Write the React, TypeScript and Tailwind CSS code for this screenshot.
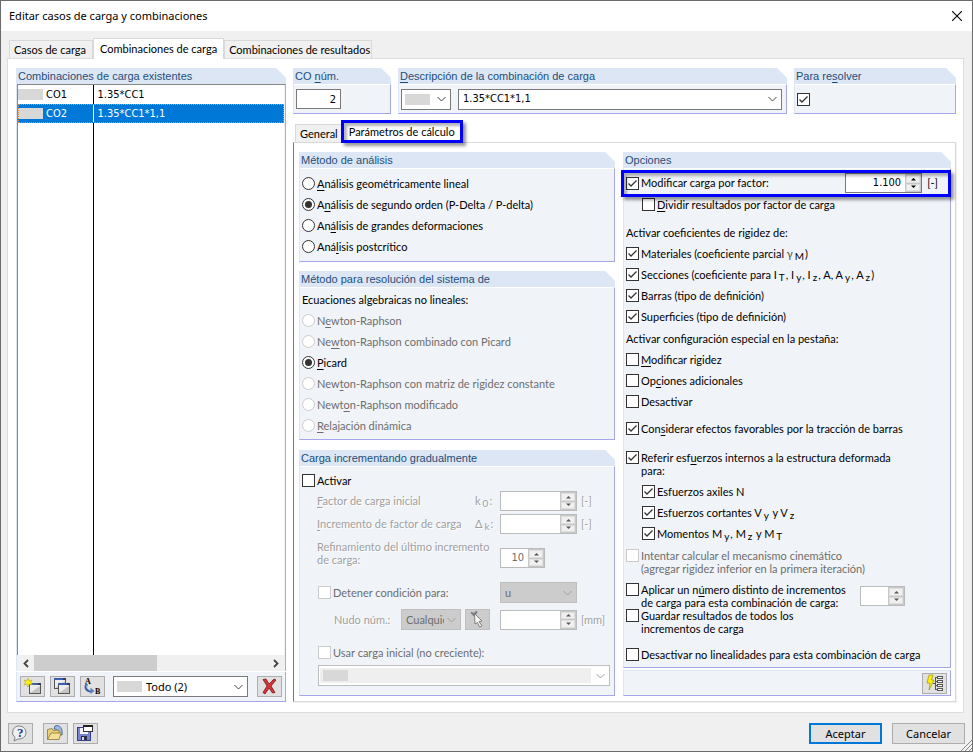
import type { ReactNode } from 'react';
import { clsx } from 'clsx';

const mono = "font-['DejaVu_Sans_Condensed','DejaVu_Sans',sans-serif] text-[11px]";

/* Text with an underlined access key, marked by & */
function Mn({ text }: { text: string }) {
  const i = text.indexOf('&');
  if (i < 0) return <>{text}</>;
  return (
    <>
      {text.slice(0, i)}
      <span className="underline underline-offset-2">{text[i + 1]}</span>
      {text.slice(i + 2)}
    </>
  );
}

function Sub({ children }: { children: ReactNode }) {
  return <sub className="bottom-[-2px] mr-px ml-0.5 text-[10px]">{children}</sub>;
}

function Group({ title, className, bodyClass, children }: { title: string; className?: string; bodyClass?: string; children: ReactNode }) {
  return (
    <section
      className={clsx(
        'flex flex-col border-b border-l border-b-[#a6a6ea] border-l-[#dce6f5] bg-[#f0f4f9] [clip-path:polygon(0_0,calc(100%-10px)_0,100%_10px,100%_100%,0_100%)]',
        className,
      )}
    >
      <h2 className="h-4 shrink-0 truncate bg-[#dce6f5] pl-px font-['Liberation_Sans',Arial,sans-serif] text-[11px] leading-4 text-[#1f4e79]">
        <Mn text={title} />
      </h2>
      <div className={clsx('flex-1 border-t border-r border-t-white border-r-[#a6a6ea]', bodyClass)}>{children}</div>
    </section>
  );
}

function CheckBox({ checked, disabled, label }: { checked?: boolean; disabled?: boolean; label?: string }) {
  return (
    <span className="relative inline-flex shrink-0">
      <input
        type="checkbox"
        aria-label={label}
        defaultChecked={checked}
        disabled={disabled}
        className="peer h-[13px] w-[13px] appearance-none border border-[#333] bg-white disabled:border-[#ccc]"
      />
      <svg viewBox="0 0 13 13" className="pointer-events-none absolute inset-0 hidden h-[13px] w-[13px] peer-checked:block">
        <path d="M2.5 6.5 L5 9 L10.5 3.5" fill="none" stroke="#333" strokeWidth="1.3" />
      </svg>
    </span>
  );
}

function Check({ text, checked, disabled, className, children }: { text?: string; checked?: boolean; disabled?: boolean; className?: string; children?: ReactNode }) {
  return (
    <label className={clsx('flex h-[21px] items-center gap-0.5', disabled && 'text-[#6d6d6d]', className)}>
      <CheckBox checked={checked} disabled={disabled} />
      <span>{text ? <Mn text={text} /> : children}</span>
    </label>
  );
}

function Check2({ lines, checked, disabled, className }: { lines: string[]; checked?: boolean; disabled?: boolean; className?: string }) {
  return (
    <label className={clsx('flex items-start gap-0.5 leading-[13px]', disabled && 'text-[#6d6d6d]', className)}>
      <CheckBox checked={checked} disabled={disabled} />
      <span>
        <Mn text={lines[0]} />
        <br />
        {lines[1]}
      </span>
    </label>
  );
}

function Radio({ name, text, checked, disabled }: { name: string; text: string; checked?: boolean; disabled?: boolean }) {
  return (
    <label className={clsx('flex h-[21px] items-center gap-0.5', disabled && 'text-[#6d6d6d]')}>
      <span className="relative inline-flex shrink-0">
        <input
          type="radio"
          name={name}
          defaultChecked={checked}
          disabled={disabled}
          className="peer h-[13px] w-[13px] appearance-none rounded-full border border-[#333] bg-white disabled:border-[#ccc]"
        />
        <span className="pointer-events-none absolute inset-[3px] hidden rounded-full bg-[#333] peer-checked:block" />
      </span>
      <span>
        <Mn text={text} />
      </span>
    </label>
  );
}

function Arrow({ up }: { up?: boolean }) {
  return (
    <svg viewBox="0 0 7 4" className="h-1 w-[7px]">
      <path d={up ? 'M1 3.5 L3.5 1 L6 3.5Z' : 'M1 .5 L3.5 3 L6 .5Z'} fill="currentColor" />
    </svg>
  );
}

function Spin({ label, value, disabled, className }: { label: string; value?: string; disabled?: boolean; className?: string }) {
  const btn = 'flex flex-1 items-center justify-center border border-[#dedede] bg-[#f0f0f0]';
  return (
    <span className={clsx('flex h-5 shrink-0 border', disabled ? 'border-[#bbb] text-[#6d6d6d]' : 'border-[#7a7a7a]', className)}>
      <input
        type="text"
        aria-label={label}
        defaultValue={value}
        disabled={disabled}
        className={clsx('w-0 min-w-0 flex-1 bg-white pr-1 text-right', mono)}
      />
      <span className={clsx('flex w-4 flex-col gap-px bg-[#c8c8c8] p-px', disabled ? 'text-[#555]' : 'text-black')}>
        <button type="button" aria-label={`${label} +`} disabled={disabled} className={btn}>
          <Arrow up />
        </button>
        <button type="button" aria-label={`${label} -`} disabled={disabled} className={btn}>
          <Arrow />
        </button>
      </span>
    </span>
  );
}

function Combo({ label, value, swatch, disabled, className, innerClass, textClass }: { label: string; value?: string; swatch?: boolean; disabled?: boolean; className?: string; innerClass?: string; textClass?: string }) {
  return (
    <span className={clsx('relative flex h-[21px] items-center border', className, disabled ? 'border-[#bfbfbf] text-[#6d6d6d]' : 'border-[#7a7a7a]')}>
      <span className={clsx('flex min-w-0 flex-1 items-center', innerClass)}>
        {swatch && <span className="ml-[3px] h-[11px] w-[25px] shrink-0 bg-[#d8d8d8]" />}
        <select aria-label={label} disabled={disabled} className={clsx('w-0 min-w-0 flex-1 appearance-none truncate bg-transparent pr-4 pl-1 opacity-100', textClass)}>
          <option>{value}</option>
        </select>
      </span>
      <svg viewBox="0 0 9 6" className={clsx('pointer-events-none absolute right-1 h-1.5 w-[9px]', disabled ? 'text-[#a0a0a0]' : 'text-[#444]')}>
        <path d="M.5 1 L4.5 5 L8.5 1" fill="none" stroke="currentColor" />
      </svg>
    </span>
  );
}

function IconButton({ label, disabled, className, children }: { label: string; disabled?: boolean; className?: string; children: ReactNode }) {
  return (
    <button
      type="button"
      aria-label={label}
      disabled={disabled}
      className={clsx('h-[21px] w-[25px] shrink-0 border', disabled ? 'border-[#bfbfbf] bg-[#ccc]' : 'border-[#adadad] bg-[#e1e1e1]', className)}
    >
      <svg viewBox="1 1 23 19" className="block h-full w-full">
        {children}
      </svg>
    </button>
  );
}

function MiniWindow({ x, y }: { x: number; y: number }) {
  return (
    <g>
      <rect x={x + 0.5} y={y + 0.5} width="11" height="10" fill="#ececec" stroke="#555" />
      <path d={`M${x + 1} ${y + 10} L${x + 11} ${y + 3} V${y + 10}Z`} fill="#c4c4c4" />
      <rect x={x} y={y} width="12" height="2" fill="#3a5fb0" />
      <rect x={x + 9} y={y} width="3" height="2" fill="#333a4d" />
    </g>
  );
}

/* Blue frame that marks a control */
function Marker({ className }: { className?: string }) {
  return (
    <span
      className={clsx(
        'pointer-events-none absolute z-10 border-[3px] border-[#0000ff] shadow-[3px_3px_3px_rgba(0,0,0,0.4),inset_3px_3px_3px_rgba(0,0,0,0.3)]',
        className,
      )}
    />
  );
}

const rows = [
  { id: 'CO1', formula: '1.35*CC1' },
  { id: 'CO2', formula: '1.35*CC1*1,1', selected: true },
];

const solvers = [
  { text: 'N&ewton-Raphson', disabled: true },
  { text: 'Ne&wton-Raphson combinado con Picard', disabled: true },
  { text: '&Picard', checked: true },
  { text: 'New&ton-Raphson con matriz de rigidez constante', disabled: true },
  { text: 'Newt&on-Raphson modificado', disabled: true },
  { text: '&Relajación dinámica', disabled: true },
];

function CombinationList() {
  return (
    <div className="flex w-[270px] shrink-0 flex-col">
      <Group title="Combinaciones de carga existentes" className="flex-1 border-b-0" bodyClass="flex flex-col border-t-[#888]! pr-px">
        <div className="flex flex-1 border-l border-[#888] bg-white">
          <table className="h-full w-full border-collapse">
            <tbody>
              {rows.map(r => (
                <tr
                  key={r.id}
                  className={clsx('h-[19px]', mono, r.selected && 'bg-[#0078d7] text-white outline outline-dotted -outline-offset-1 outline-[#e8923c]')}
                >
                  <td className={clsx('w-[75px] border-r p-0', r.selected ? 'border-white' : 'border-black')}>
                    <div className="flex items-center gap-[3px]">
                      <span className="h-[11px] w-[25px] bg-[#d8d8d8]" />
                      {r.id}
                    </div>
                  </td>
                  <td className="py-0 pl-1">{r.formula}</td>
                </tr>
              ))}
              <tr>
                <td className="border-r border-black" />
                <td />
              </tr>
            </tbody>
          </table>
        </div>
        <div className="flex h-4 items-center bg-[#f0f0f0]">
          <button type="button" aria-label="Desplazar a la izquierda" className="flex w-[17px] justify-center">
            <svg viewBox="0 0 6 9" className="h-[9px] w-1.5">
              <path d="M5 1 L1.5 4.5 L5 8" fill="none" stroke="#444" strokeWidth="1.8" />
            </svg>
          </button>
          <div className="flex h-full flex-1">
            <span className="w-[53%] bg-[#cdcdcd]" />
          </div>
          <button type="button" aria-label="Desplazar a la derecha" className="flex w-[17px] justify-center">
            <svg viewBox="0 0 6 9" className="h-[9px] w-1.5">
              <path d="M1 1 L4.5 4.5 L1 8" fill="none" stroke="#444" strokeWidth="1.8" />
            </svg>
          </button>
        </div>
      </Group>
      <div className="mt-px flex h-[30px] items-center gap-[5px] border-r border-b border-l border-[#a6a6ea] border-l-[#dce6f5] bg-[#f0f4f9] pr-[3px] pl-[3px]">
        <IconButton label="Nueva combinación">
          <MiniWindow x={9} y={7} />
          <path d="M8 2 L9.300 5 L12 4 L11 6.500 L12.500 9 L9.300 8 L8 11 L6.700 8 L4 9 L5.500 6.500 L4 4 L6.700 5Z" fill="#fff200" stroke="#a89a20" strokeWidth=".5" />
        </IconButton>
        <IconButton label="Copiar combinación">
          <MiniWindow x={4} y={2} />
          <MiniWindow x={8} y={7} />
        </IconButton>
        <IconButton label="Renumerar">
          <text x="5" y="8" className="font-['Liberation_Serif',serif] text-[8px] font-bold">A</text>
          <path d="M7 8 C4 12 7 16 12 15" fill="none" stroke="#3d5f9e" strokeWidth="2.500" />
          <path d="M7 9 C6 12 8 14.500 12 14.500" fill="none" stroke="#a9c4ee" strokeWidth="1" />
          <path d="M10.500 11.500 L14.500 15 L10.500 18Z" fill="#5d82c4" />
          <text x="15" y="18" className="font-['Liberation_Serif',serif] text-[8px] font-bold">B</text>
        </IconButton>
        <Combo label="Filtro" value="Todo (2)" swatch className="mr-1 ml-[3px] flex-1 bg-white" textClass="font-['Noto_Sans',sans-serif] text-[11px]" />
        <IconButton label="Eliminar">
          <path d="M6 3.500 L9 3 L12 8 L17 3 L19 4 L14 10 L18 16.500 L15.500 17 L12 12 L8 18 L6 16.500 L10 10Z" fill="#d3333a" stroke="#7c1519" strokeWidth=".8" />
        </IconButton>
      </div>
    </div>
  );
}

function IncrementalLoad() {
  const etched = 'text-[#a0a0a0] [text-shadow:1px_1px_0_white]';
  return (
    <Group title="Carga incrementando gradualmente" className="flex-1" bodyClass="pt-[3px] pr-1 pb-2 pl-0.5">
      <Check text="Activar" />
      <div className="grid grid-cols-[1fr_25px_77px_33px] items-center gap-y-[3px] pl-[15px]">
        <span className={etched}><Mn text="&Factor de carga inicial" /></span>
        <span className={etched}>k<Sub>0</Sub>:</span>
        <Spin label="Factor de carga inicial" disabled />
        <span className={clsx('pl-1', etched)}>[-]</span>
        <span className={etched}><Mn text="&Incremento de factor de carga" /></span>
        <span className={etched}>Δ<Sub>k</Sub>:</span>
        <Spin label="Incremento de factor de carga" disabled />
        <span className={clsx('pl-1', etched)}>[-]</span>
      </div>
      <div className="mt-[6px] grid grid-cols-[1fr_77px_33px] items-end pl-[15px]">
        <span className={clsx('pb-0.5 leading-[13px]', etched)}>
          Refinamiento del último incremento
          <br />
          de carga:
        </span>
        <Spin label="Refinamiento" value="10" disabled className="w-[45px]" />
      </div>
      <div className="mt-3.5 grid grid-cols-[1fr_77px_33px] items-center pl-4">
        <Check text="Detener condición para:" disabled />
        <Combo label="Condición" value="u" disabled className="bg-[#ccc]" />
      </div>
      <div className="mt-1.5 flex items-center">
        <span className={clsx('flex-1 pl-8', etched)}>Nudo núm.:</span>
        <Combo label="Nudo" value="Cualquiera" disabled className="w-[60px] bg-[#ccc]" textClass="text-clip!" />
        <IconButton label="Seleccionar nudo" disabled className="mr-2.5 ml-1">
          <path d="M6 3.500 L11 6.500 M8 6.500 L12 2.500" stroke="#777" strokeWidth="2" />
          <path d="M9.500 4.500 L17 12 L14 12.500 L17 17 L14.500 18 L12.500 13.500 L10 15Z" fill="#f6f6f6" stroke="#777" strokeWidth=".9" />
        </IconButton>
        <Spin label="Valor límite" disabled className="w-[77px]" />
        <span className={clsx('w-[33px] pl-1', etched)}>[mm]</span>
      </div>
      <Check text="Usar carga inicial (no creciente):" disabled className="mt-3 ml-4" />
      <div className="mt-0.5 ml-4 flex">
        <Combo label="Carga inicial" swatch disabled className="flex-1 bg-white" innerClass="mr-[18px] ml-px h-[15px] bg-[#efefef]" />
      </div>
    </Group>
  );
}

function Options() {
  return (
    <div className="relative flex flex-col">
      <Group title="Opciones" className="flex-1" bodyClass="pt-[3px] pb-0.5 pl-0.5">
        <div className="flex h-[22px] items-center pr-3">
          <Check text="Modificar carga por factor:" checked className="flex-1" />
          <Spin label="Factor" value="1.100" className="w-[77px]" />
          <span className="pl-[5px]">[-]</span>
        </div>
        <Check text="&Dividir resultados por factor de carga" className="ml-4" />

        <p className="mt-2 h-5 leading-5">Activar coeficientes de rigidez de:</p>
        <Check checked>Materiales (coeficiente parcial <span className="text-[#555]">γ</span><Sub>M</Sub>)</Check>
        <Check checked>
          Secciones (coeficiente para I<Sub>T</Sub>, I<Sub>y</Sub>, I<Sub>z</Sub>, A, A<Sub>y</Sub>, A<Sub>z</Sub>)
        </Check>
        <Check text="Barras (tipo de definición)" checked />
        <Check text="Superficies (tipo de definición)" checked />

        <p className="mt-0.5 h-5 leading-5">Activar configuración especial en la pestaña:</p>
        <Check text="&Modificar rigidez" />
        <Check text="Op&ciones adicionales" />
        <Check text="Desactivar" />

        <Check text="Con&siderar efectos favorables por la tracción de barras" checked className="mt-[6px]" />
        <Check2 lines={['Referir esf&uerzos internos a la estructura deformada', 'para:']} checked className="mt-3" />
        <div className="mt-1 ml-4">
          <Check text="Esfuerzos axiles N" checked />
          <Check checked>Esfuerzos cortantes V<Sub>y</Sub> y V<Sub>z</Sub></Check>
          <Check checked>Momentos M<Sub>y</Sub>, M<Sub>z</Sub> y M<Sub>T</Sub></Check>
        </div>
        <Check2 lines={['Intentar calcular el mecanismo cinemático', '(agregar rigidez inferior en la primera iteración)']} disabled className="mt-[5px]" />
        <div className="mt-2 flex items-center justify-between pr-[45px]">
          <Check2 lines={['Aplicar un n&úmero distinto de incrementos', 'de carga para esta combinación de carga:']} />
          <Spin label="Incrementos" disabled className="w-[45px]" />
        </div>
        <Check2 lines={['Guardar resultados de todos los', 'incrementos de carga']} />
        <Check text="Desactivar no linealidades para esta combinación de carga" className="mt-[9px]" />
      </Group>
      <div className="mt-0.5 flex h-[26px] items-center justify-end border border-[#a6a6ea] border-t-[#dce6f5] border-l-[#dce6f5] bg-[#f0f4f9] pr-[3px]">
        <IconButton label="Configuración">
          <path d="M7 2 L11 2 L9.500 7 L12 7 L7 17 L8 10 L5 10Z" fill="#fff200" stroke="#9b8f1c" strokeWidth=".7" />
          <path d="M13.500 4 V17 M11 10.500 H13.500 M13.500 4.500 H15 M13.500 8.500 H15 M13.500 12.500 H15 M13.500 16.500 H15" stroke="#555" fill="none" />
          <g fill="#fff" stroke="#555">
            <rect x="15.500" y="3.500" width="5" height="2" />
            <rect x="15.500" y="7.500" width="5" height="2" />
            <rect x="15.500" y="11.500" width="5" height="2" />
            <rect x="15.500" y="15.500" width="5" height="2" />
          </g>
        </IconButton>
      </div>
      <Marker className="top-[18px] right-0 -left-0.5 h-[27px]" />
    </div>
  );
}

function Details() {
  return (
    <div className="flex min-w-0 flex-1 flex-col">
      <div className="flex h-[46px] gap-[7px]">
        <Group title="CO &núm." className="w-[98px]" bodyClass="flex items-center pl-0.5">
          <input aria-label="CO núm." defaultValue="2" className={clsx('h-5 w-[45px] border border-[#7a7a7a] bg-white pr-1 text-right', mono)} />
        </Group>
        <Group title="&Descripción de la combinación de carga" className="flex-1" bodyClass="flex items-center gap-[7px] pr-1 pl-0.5">
          <Combo label="Color" swatch className="w-[50px] bg-white" />
          <Combo label="Descripción" value="1.35*CC1*1,1" className="flex-1 bg-white" textClass={mono} />
        </Group>
        <Group title="Para re&solver" className="w-[162px]" bodyClass="flex items-center pl-0.5">
          <CheckBox checked label="Para resolver" />
        </Group>
      </div>

      <div className="mt-[7px] flex items-end pl-0.5" role="tablist">
        <button type="button" role="tab" className="h-[18px] border border-r-0 border-b-0 border-[#d9d9d9] bg-[#f0f0f0] pr-[3px] pl-1">General</button>
        <button type="button" role="tab" aria-selected="true" className="relative z-10 -mb-px h-[22px] w-[122px] bg-white">
          Parámetros de cálculo
          <Marker className="inset-x-0 -top-px h-[23px]" />
        </button>
      </div>

      <div className="grid flex-1 grid-cols-[316fr_328fr] gap-2 border border-[#d9d9d9] border-l-[#7a7a7a] pt-[9px] pr-1 pb-[5px] pl-[5px] shadow-[1px_1px_0_#f0f0f0]">
        <div className="flex min-w-0 flex-col">
          <Group title="Método de análisis" className="mb-[9px]" bodyClass="py-1 pl-0.5">
            <Radio name="metodo" text="&Análisis geométricamente lineal" />
            <Radio name="metodo" text="A&nálisis de segundo orden (P-Delta / P-delta)" checked />
            <Radio name="metodo" text="An&álisis de grandes deformaciones" />
            <Radio name="metodo" text="Aná&lisis postcrítico" />
          </Group>
          <Group title="Método para resolución del sistema de" className="mb-2.5" bodyClass="pt-0.5 pb-[3px] pl-0.5">
            <p className="h-5 leading-5">Ecuaciones algebraicas no lineales:</p>
            {solvers.map(s => (
              <Radio key={s.text} name="resolucion" {...s} />
            ))}
          </Group>
          <IncrementalLoad />
        </div>
        <Options />
      </div>
    </div>
  );
}

export default function App() {
  const tab = 'h-[18px] border border-b-0 border-[#d9d9d9] bg-[#f0f0f0] pl-1';
  return (
    <div className="relative flex min-h-screen flex-col border border-[#6b6b6b] bg-[#f0f0f0] font-['Lato',Tahoma,sans-serif] text-[11px] leading-[14px] text-black">
      <header className="flex h-[30px] shrink-0 items-center justify-between bg-white pr-2.5 pl-2">
        <h1 className="font-['Noto_Sans',sans-serif] text-[11px]">Editar casos de carga y combinaciones</h1>
        <button type="button" aria-label="Cerrar">
          <svg viewBox="0 0 10 10" className="h-2.5 w-2.5">
            <path d="M0 0 L10 10 M10 0 L0 10" stroke="#000" strokeWidth="1.1" />
          </svg>
        </button>
      </header>

      <div className="mt-[7px] flex items-end pl-2" role="tablist">
        <button type="button" role="tab" className={clsx(tab, 'pr-1.5')}>Casos de carga</button>
        <button type="button" role="tab" aria-selected="true" className="relative z-10 -mb-px h-[21px] border border-b-0 border-[#d9d9d9] bg-white px-1.5 pb-px">
          Combinaciones de carga
        </button>
        <button type="button" role="tab" className={clsx(tab, 'pr-px')}>Combinaciones de resultados</button>
      </div>

      <main className="mr-2 ml-1.5 flex flex-1 gap-[7px] border border-[#dcdcdc] bg-white pt-[9px] pr-[7px] pb-2.5 pl-2">
        <CombinationList />
        <Details />
      </main>

      <footer className="flex items-center px-[7px] pt-2.5 pb-[7px]">
        <IconButton label="Ayuda" className="mr-2.5">
          <path d="M12 3 A7 6.500 0 1 1 10 16 L6 18 L7 14.500 A7 6.500 0 0 1 12 3Z" fill="#eef0f4" stroke="#777" strokeWidth=".9" />
          <text x="9" y="14" className="font-['Liberation_Serif',serif] text-[13px] font-bold" fill="#27408b">?</text>
        </IconButton>
        <IconButton label="Abrir" className="mr-[5px]">
          <path d="M12 3 C17 1 20 6 19 12 L15 12 C16 8 14 6 11 6Z" fill="#9dbbe6" stroke="#35588f" strokeWidth=".8" />
          <path d="M4.500 16.500 V6.500 L9 5.500 L10 7.500 L16 7 V10" fill="#ead07c" stroke="#8d7734" strokeWidth=".8" />
          <path d="M4.500 16.500 L8 10 H18 L16 16.500Z" fill="#f3df96" stroke="#8d7734" strokeWidth=".8" />
        </IconButton>
        <IconButton label="Guardar">
          <rect x="4.500" y="4.500" width="13" height="13" fill="#7884cf" stroke="#363f88" />
          <rect x="7" y="5" width="8" height="6" fill="#f4f4f4" />
          <rect x="8" y="13" width="6" height="4" fill="#2c2f45" />
          <rect x="9" y="14" width="2" height="3" fill="#d8d8e8" />
          <rect x="10.500" y="2.500" width="9" height="6" fill="#fff" stroke="#333" />
          <rect x="10" y="2" width="10" height="2" fill="#222" />
        </IconButton>
        <div className="flex flex-1 justify-end gap-2.5 font-['Noto_Sans',sans-serif]">
          <button type="submit" className="h-[21px] w-[73px] border-2 border-[#0078d7] bg-[#e1e1e1]">Aceptar</button>
          <button type="button" className="h-[21px] w-[73px] border border-[#adadad] bg-[#e1e1e1]">Cancelar</button>
        </div>
      </footer>

      <svg viewBox="0 0 12 12" className="pointer-events-none absolute right-0 bottom-0 h-3 w-3">
        <path d="M1 12 L12 1 M5 12 L12 5 M9 12 L12 9" stroke="#8c8c8c" />
      </svg>
    </div>
  );
}
